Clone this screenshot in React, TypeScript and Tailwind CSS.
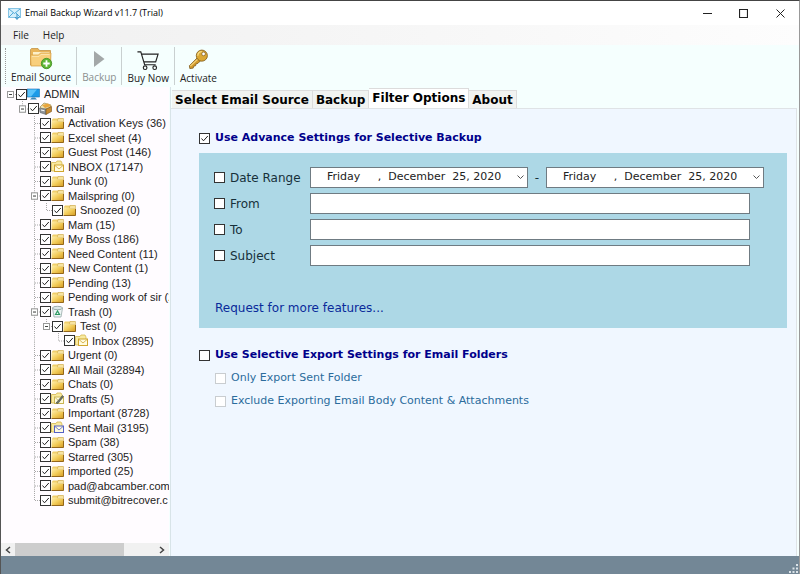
import { useState } from 'react'
import type { ReactNode } from 'react'
import clsx from 'clsx'

type IconName = 'computer' | 'account' | 'folder' | 'inbox' | 'trash' | 'drafts' | 'sent'

interface TreeItem {
  readonly label: string
  readonly level: number
  readonly icon?: IconName
  readonly expanded?: boolean
  readonly last?: boolean
}

const treeItems: TreeItem[] = [
  { label: 'ADMIN', level: 0, icon: 'computer', expanded: true },
  { label: 'Gmail', level: 1, icon: 'account', expanded: true },
  { label: 'Activation Keys (36)', level: 2 },
  { label: 'Excel sheet (4)', level: 2 },
  { label: 'Guest Post (146)', level: 2 },
  { label: 'INBOX (17147)', level: 2, icon: 'inbox' },
  { label: 'Junk (0)', level: 2 },
  { label: 'Mailspring (0)', level: 2, expanded: true },
  { label: 'Snoozed (0)', level: 3, last: true },
  { label: 'Mam (15)', level: 2 },
  { label: 'My Boss (186)', level: 2 },
  { label: 'Need Content (11)', level: 2 },
  { label: 'New Content (1)', level: 2 },
  { label: 'Pending (13)', level: 2 },
  { label: 'Pending work of sir (2', level: 2 },
  { label: 'Trash (0)', level: 2, icon: 'trash', expanded: true },
  { label: 'Test (0)', level: 3, expanded: true, last: true },
  { label: 'Inbox (2895)', level: 4, icon: 'inbox', last: true },
  { label: 'Urgent (0)', level: 2 },
  { label: 'All Mail (32894)', level: 2 },
  { label: 'Chats (0)', level: 2 },
  { label: 'Drafts (5)', level: 2, icon: 'drafts' },
  { label: 'Important (8728)', level: 2 },
  { label: 'Sent Mail (3195)', level: 2, icon: 'sent' },
  { label: 'Spam (38)', level: 2 },
  { label: 'Starred (305)', level: 2 },
  { label: 'imported (25)', level: 2 },
  { label: 'pad@abcamber.com', level: 2 },
  { label: 'submit@bitrecover.c', level: 2, last: true },
]

const tabs = ['Select Email Source', 'Backup', 'Filter Options', 'About']

const textFields = ['From', 'To', 'Subject']

const today = 'Friday\u00a0\u00a0\u00a0\u00a0\u00a0,\u00a0\u00a0December\u00a0\u00a025,\u00a02020'

function FolderShape() {
  return (
    <>
      <path d="M1 4V2.5L2 1.5H12V10L11 11H1Z" fill="#f0cf6a" />
      <path d="M7 1.5H12.5V5H6Z" fill="#f7e3a0" stroke="#c39a3a" strokeWidth=".5" />
      <path d="M.5 3.5H6L7.5 5H12.5V11.5H.5Z" fill="url(#folderFill)" />
      <path d="M.5 11.5H12.5V5" fill="none" stroke="#94671a" strokeWidth="1" />
    </>
  )
}

function MailFolderShape({ color }: { color: string }) {
  return (
    <>
      <path d="M.5 2.5H5L6 1H10L11 3V11H.5Z" fill="#f8e9a0" stroke="#d6b84f" strokeWidth=".8" />
      <rect x="3.5" y="5" width="9" height="6.5" fill="#fffbe0" stroke={color} />
      <path d="M4 5.5L8 9L12 5.5" fill="none" stroke={color} strokeWidth=".8" />
    </>
  )
}

function TreeIcon({ name }: { name: IconName }) {
  return (
    <svg className="h-[13px] w-[13px] shrink-0" viewBox="0 0 13 13" aria-hidden="true">
      {name === 'folder' && <FolderShape />}
      {name === 'computer' && (
        <>
          <rect x=".5" y="1" width="12" height="8" fill="#1c9be8" stroke="#1672b0" strokeWidth=".6" />
          <path d="M1 1.5H10L4 8.5H1Z" fill="#5cc4fa" />
          <path d="M5 9.5H8L10 11.5H3Z" fill="#3d88b8" />
        </>
      )}
      {name === 'account' && (
        <>
          <path d="M1 5L5 1L12 3L11 6L4 8Z" fill="#efe2b0" stroke="#9c8a4c" strokeWidth=".7" />
          <path d="M3 3L9 1.5L12 4L6 6Z" fill="#e9a53c" />
          <path d="M.5 6L7 7V12.5L1 10.5Z" fill="#8f9498" stroke="#5b6064" strokeWidth=".6" />
          <path d="M7 7L12.5 4.5V9.5L7 12.5Z" fill="#c88c32" stroke="#775019" strokeWidth=".6" />
          <path d="M2 8L5.5 8.8" stroke="#fff" />
        </>
      )}
      {name === 'inbox' && <MailFolderShape color="#d0a52f" />}
      {name === 'sent' && <MailFolderShape color="#5661c4" />}
      {name === 'drafts' && (
        <>
          <MailFolderShape color="#c9b454" />
          <path d="M5 11L11.5 3.5L12.5 4.5L7 11.5Z" fill="#6d7468" stroke="#444b40" strokeWidth=".6" />
        </>
      )}
      {name === 'trash' && (
        <>
          <path d="M1.5 3L3 12H10L11.5 3Z" fill="#edf5f5" stroke="#98a9a9" strokeWidth=".8" />
          <ellipse cx="6.5" cy="3" rx="5" ry="1.7" fill="#dce8e8" stroke="#8b9c9c" strokeWidth=".8" />
          <path d="M4.5 9.5L6.5 6L8.5 9.5Z" fill="none" stroke="#2d9a63" strokeWidth="1.2" />
        </>
      )}
    </svg>
  )
}

interface CheckBoxProps {
  readonly id: string
  readonly defaultChecked?: boolean
  readonly disabled?: boolean
}

function CheckBox({ id, defaultChecked, disabled }: CheckBoxProps) {
  return (
    <span className="relative block h-[11px] w-[11px] shrink-0">
      <input
        id={id}
        type="checkbox"
        defaultChecked={defaultChecked}
        disabled={disabled}
        className="peer block h-[11px] w-[11px] appearance-none border border-[#333] bg-white disabled:border-[#c9cdd0]"
      />
      <svg
        className="pointer-events-none absolute inset-0 hidden h-[11px] w-[11px] peer-checked:block"
        viewBox="0 0 11 11"
        aria-hidden="true"
      >
        <path d="M2.5 5.5L4.5 7.8L8.8 3" fill="none" stroke="#222" strokeWidth="1" />
      </svg>
    </span>
  )
}

interface GuideProps {
  readonly branch?: boolean
  readonly last?: boolean
  readonly expanded?: boolean
  readonly root?: boolean
}

// One column of the tree's connecting lines
function Guide({ branch, last, expanded, root }: GuideProps) {
  return (
    <svg className="h-full w-3 shrink-0" viewBox="0 0 12 14" preserveAspectRatio="none" aria-hidden="true">
      {!root && <path d={last ? 'M6.5 0V7' : 'M6.5 0V14'} stroke="#a8a8a8" strokeDasharray="1 1" />}
      {branch && <path d="M7 7.5H12" stroke="#a8a8a8" strokeDasharray="1 1" />}
      {expanded && (
        <>
          <rect x="3.5" y="4.5" width="6" height="6" fill="#fff" stroke="#999" />
          <path d="M5 7.5H8" stroke="#444" />
        </>
      )}
    </svg>
  )
}

function TreeRow({ item, index }: { item: TreeItem; index: number }) {
  return (
    <li
      role="treeitem"
      aria-level={item.level + 1}
      aria-expanded={item.expanded}
      className="flex items-center odd:h-[14px] even:h-[15px]"
    >
      {Array.from({ length: item.level }, (_, column) =>
        column === 2 ? (
          <Guide key={column} />
        ) : (
          <span key={column} className="w-3 shrink-0" />
        ),
      )}
      <Guide branch last={item.last || item.level === 1} expanded={item.expanded} root={item.level === 0} />
      <CheckBox id={`tree-${index}`} defaultChecked />
      <TreeIcon name={item.icon ?? 'folder'} />
      <label htmlFor={`tree-${index}`} className="pl-1 whitespace-nowrap">
        {item.label}
      </label>
    </li>
  )
}

function FolderTree() {
  return (
    <aside className="flex w-[168px] shrink-0 flex-col bg-[#fffcff]">
      <svg className="absolute h-0 w-0" aria-hidden="true">
        <linearGradient id="folderFill" x1="0" y1="0" x2="1" y2="1">
          <stop offset="0" stopColor="#fff0b0" />
          <stop offset=".5" stopColor="#f3cd5a" />
          <stop offset="1" stopColor="#d39a24" />
        </linearGradient>
      </svg>
      <ul role="tree" className="flex-1 overflow-hidden pl-[3px] font-['Liberation_Sans',Arial,sans-serif] text-[11px] leading-[14px] text-[#222]">
        {treeItems.map((item, index) => (
          <TreeRow key={item.label} item={item} index={index} />
        ))}
      </ul>
      <div className="flex h-[13px] bg-[#f1f1f1]">
        <button type="button" aria-label="Scroll left" className="flex w-[14px] items-center justify-center">
          <svg width="6" height="8" viewBox="0 0 6 8"><path d="M5 1L1.5 4L5 7" fill="none" stroke="#444" strokeWidth="1.5" /></svg>
        </button>
        <div className="flex-1">
          <div className="h-full w-[78%] bg-[#cdcdcd]" />
        </div>
        <button type="button" aria-label="Scroll right" className="flex w-[14px] items-center justify-center">
          <svg width="6" height="8" viewBox="0 0 6 8"><path d="M1 1L4.5 4L1 7" fill="none" stroke="#444" strokeWidth="1.5" /></svg>
        </button>
      </div>
    </aside>
  )
}

function TitleBar() {
  return (
    <header className="flex h-6 items-center bg-white pl-[7px]">
      <svg className="h-[13px] w-[13px]" viewBox="0 0 13 13" aria-hidden="true">
        <rect x=".5" y="1.5" width="12" height="9" fill="#d5effb" stroke="#86c4e4" />
        <path d="M1 2L6.5 6.5L12 2M1 10L5 6M12 10L8 6" fill="none" stroke="#4fa9d8" />
        <path d="M9 7V12M7 10L9 12.5L11 10" fill="none" stroke="#348fc4" />
      </svg>
      <h1 className="flex-1 pl-1 text-[9px] text-black">Email Backup Wizard v11.7 (Trial)</h1>
      <button type="button" aria-label="Minimize" className="flex w-[36px] justify-center">
        <svg width="9" height="9" viewBox="0 0 9 9"><path d="M0 4.5H9" stroke="#222" /></svg>
      </button>
      <button type="button" aria-label="Maximize" className="flex w-[37px] justify-center">
        <svg width="9" height="9" viewBox="0 0 9 9"><path d="M.5 .5H8.5V8.5H.5Z" fill="none" stroke="#222" strokeWidth="1.2" /></svg>
      </button>
      <button type="button" aria-label="Close" className="flex w-[37px] justify-center">
        <svg width="9" height="9" viewBox="0 0 9 9"><path d="M.5 .5L8.5 8.5M8.5 .5L.5 8.5" stroke="#222" /></svg>
      </button>
    </header>
  )
}

function ToolButton({ label, disabled, children }: { label: string; disabled?: boolean; children: ReactNode }) {
  return (
    <button
      type="button"
      disabled={disabled}
      className="my-[2px] flex flex-col items-center border-r border-[#c9d0d0] px-[5px] text-[10px] leading-[14px] text-[#222] last:border-r-0 disabled:text-[#8a8f8f]"
    >
      {children}
      {label}
    </button>
  )
}

function Toolbar() {
  return (
    <div className="flex h-[42px] bg-[#f5fffe]">
      <span className="my-[3px] ml-1 w-px border-l border-dotted border-[#999]" />
      <ToolButton label="Email Source">
        <svg width="24" height="23" viewBox="0 0 24 23" aria-hidden="true">
          <path d="M1.500 18V2.500L2.500 1.500H9L10.500 3.500H21.500V17Z" fill="#e9b55a" stroke="#c08a38" strokeWidth=".7" />
          <path d="M4 5H20.500V15H4Z" fill="#fdf0c8" />
          <path d="M1.500 8H9.500L11.500 6H22L21.500 19H2Z" fill="#f8cf7c" stroke="#d59b3d" strokeWidth=".7" />
          <path d="M3 9.500H10L12 7.500H20.500" fill="none" stroke="#fde9b8" strokeWidth=".8" />
          <circle cx="17.500" cy="16.500" r="5.200" fill="#5fb534" stroke="#3b8c1f" strokeWidth=".8" />
          <path d="M17.500 13.300V19.700M14.300 16.500H20.700" stroke="#fff" strokeWidth="1.800" />
        </svg>
      </ToolButton>
      <ToolButton label="Backup" disabled>
        <svg width="22" height="23" viewBox="0 0 22 23" aria-hidden="true">
          <path d="M6 4L16.500 12L6 20Z" fill="#a3a8a8" />
        </svg>
      </ToolButton>
      <ToolButton label="Buy Now">
        <svg width="24" height="25" viewBox="0 0 24 25" aria-hidden="true">
          <path d="M1 5H4.500L8.500 18.500H20M5.500 7.500H22.500L20 15.500H8" fill="none" stroke="#222" strokeWidth="1.200" />
          <circle cx="9" cy="21.500" r="1.900" fill="none" stroke="#222" strokeWidth="1.200" />
          <circle cx="19" cy="21.500" r="1.900" fill="none" stroke="#222" strokeWidth="1.200" />
        </svg>
      </ToolButton>
      <ToolButton label="Activate">
        <svg width="22" height="25" viewBox="0 0 22 25" aria-hidden="true">
          <path d="M10.500 11L2 19.500L2.500 22.500L6 22L6.500 20L8.500 19.500L9 17.500L11 17L14.500 13.500Z" fill="#d39b2b" stroke="#7c5616" strokeWidth=".8" />
          <path d="M3 20L11.500 12" stroke="#f4d279" strokeWidth="1.200" />
          <ellipse cx="15" cy="9" rx="5.800" ry="5.800" fill="#dba733" stroke="#7c5616" strokeWidth=".8" />
          <path d="M10.800 9A4.200 4.200 0 0 1 15 4.700" fill="none" stroke="#f8dc86" strokeWidth="1.300" />
          <circle cx="16.800" cy="7.200" r="1.900" fill="#fff" stroke="#7c5616" strokeWidth=".7" />
        </svg>
      </ToolButton>
    </div>
  )
}

function DatePicker({ label }: { label: string }) {
  return (
    <span className="relative block w-[218px]">
      <select aria-label={label} className="block h-[21px] w-full appearance-none border border-[#6f7b82] bg-white pl-4 text-[11px] text-[#222]">
        <option>{today}</option>
      </select>
      <svg className="pointer-events-none absolute top-[7px] right-1" width="7" height="7" viewBox="0 0 7 7" aria-hidden="true">
        <path d="M.5 1.500L3.500 4.500L6.500 1.500" fill="none" stroke="#555" />
      </svg>
    </span>
  )
}

function FilterOptions() {
  return (
    <section className="flex-1 border-t border-r border-[#dfe3e6] bg-[#f0f7ff] pt-[21px] pr-[9px] pl-7">
      <div className="flex h-4 items-center gap-[5px] text-[11px] font-bold text-[#00008b]">
        <CheckBox id="advance" defaultChecked />
        <label htmlFor="advance">Use Advance Settings for Selective Backup</label>
      </div>

      <div className="mt-[7px] flex h-[175px] flex-col gap-[5px] bg-[#add8e6] pt-[14px] pl-[15px] text-[#16303a]">
        <div className="flex items-center">
          <div className="flex w-[96px] items-center gap-[5px]">
            <CheckBox id="date-range" />
            <label htmlFor="date-range">Date Range</label>
          </div>
          <DatePicker label="Start date" />
          <span className="w-[18px] text-center">-</span>
          <DatePicker label="End date" />
        </div>
        {textFields.map((field) => (
          <div key={field} className="flex items-center">
            <div className="flex w-[96px] items-center gap-[5px]">
              <CheckBox id={`use-${field}`} />
              <label htmlFor={`use-${field}`}>{field}</label>
            </div>
            <input type="text" aria-label={field} className="h-[21px] w-[440px] border border-[#6f7b82] bg-white px-1" />
          </div>
        ))}
        <a href="#features" className="mt-[29px] self-start pl-px text-[#0a2a9a]">
          Request for more features...
        </a>
      </div>

      <div className="mt-[19px] flex h-4 items-center gap-[5px] text-[11px] font-bold text-[#00008b]">
        <CheckBox id="selective" />
        <label htmlFor="selective">Use Selective Export Settings for Email Folders</label>
      </div>
      <div className="mt-[7px] flex flex-col gap-[7px] pl-4 text-[11px] text-[#2b6c9c]">
        <div className="flex h-4 items-center gap-[5px]">
          <CheckBox id="only-sent" disabled />
          <label htmlFor="only-sent">Only Export Sent Folder</label>
        </div>
        <div className="flex h-4 items-center gap-[5px]">
          <CheckBox id="exclude-body" disabled />
          <label htmlFor="exclude-body">Exclude Exporting Email Body Content &amp; Attachments</label>
        </div>
      </div>
    </section>
  )
}

export default function App() {
  const [activeTab, setActiveTab] = useState('Filter Options')

  return (
    <div className="flex min-h-screen flex-col border-t border-r border-l border-t-[#444] border-r-[#999] border-l-[#555] bg-[#f5fffe] font-['Open_Sans',sans-serif]">
      <TitleBar />
      <nav className="flex h-5 items-center gap-[14px] bg-linear-to-r from-[#f0f0f0] to-[#fdfdfd] pl-3 text-[10px] text-[#222]">
        <button type="button">File</button>
        <button type="button">Help</button>
      </nav>
      <Toolbar />
      <div className="flex flex-1">
        <FolderTree />
        <main className="ml-px mr-[2px] flex flex-1 flex-col border-l border-[#d8e4e8] font-['DejaVu_Sans',Verdana,sans-serif] text-xs">
          <div role="tablist" className="flex h-[21px] items-end pl-px">
            {tabs.map((tab) => (
              <button
                key={tab}
                type="button"
                role="tab"
                aria-selected={activeTab === tab}
                onClick={() => setActiveTab(tab)}
                className={clsx(
                  'border-t border-r border-[#dcdcdc] px-[3px] font-bold whitespace-nowrap text-black',
                  activeTab === tab ? 'h-5 bg-white pb-[2px]' : 'h-[18px] bg-[#f1f3f1]',
                )}
              >
                {tab}
              </button>
            ))}
          </div>
          <FilterOptions />
        </main>
      </div>
      <footer className="flex h-[18px] items-end justify-end bg-[#738796] p-[1px]">
        <svg width="9" height="9" viewBox="0 0 9 9" aria-hidden="true">
          <path d="M7 0H9V2H7ZM7 3.500H9V5.500H7ZM3.500 3.500H5.500V5.500H3.500ZM0 7H2V9H0ZM3.500 7H5.500V9H3.500ZM7 7H9V9H7Z" fill="#dbe3e8" />
        </svg>
      </footer>
    </div>
  )
}
